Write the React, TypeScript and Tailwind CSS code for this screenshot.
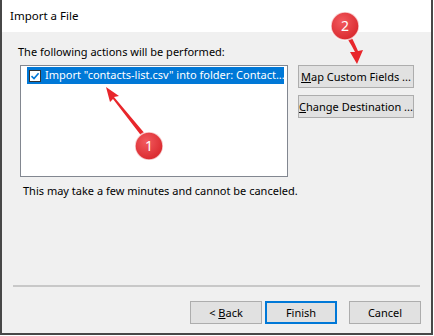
import React from "react";

function DlgButton({ children, primary = false, className = "" }: { children: React.ReactNode; primary?: boolean; className?: string }) {
    return (
        <button
            className={
                "h-[23px] bg-[#e1e1e1] text-[11px] text-black flex items-center justify-center leading-none whitespace-nowrap " +
                (primary ? "border-2 border-[#0078d7] " : "border border-[#adadad] ") +
                className
            }
        >
            {children}
        </button>
    );
}

export default function App() {
    return (
        <div
            className="relative w-[434px] h-[336px] bg-white overflow-hidden"
            style={{ fontFamily: '"Noto Sans", "Open Sans", sans-serif' }}
        >
            <div className="w-[433px] h-[335px] border-l-2 border-r-2 border-b-2 border-[#474747] flex flex-col">
                {/* title bar */}
                <div className="h-[32px] bg-white flex items-center pl-[8px] text-[11.5px] text-black shrink-0">
                    Import a File
                </div>

                {/* body */}
                <div className="flex-1 bg-[#f0f0f0] flex flex-col">
                    <div className="pl-[16px] pt-[12px] text-[11px] text-black leading-[16px]">
                        The following actions will be performed:
                    </div>

                    <div className="flex pl-[18px] pt-[5px]">
                        <div className="w-[268px] h-[112px] bg-white border border-[#828790] p-[1px]">
                            <div className="ml-[5px] h-[17px] w-[257px] bg-[#0078d7] flex items-center text-white text-[11px] whitespace-nowrap overflow-hidden">
                                <span className="ml-[2px] mr-[4px] w-[12px] h-[12px] bg-white border border-[#333] flex items-center justify-center shrink-0">
                                    <svg width="10" height="10" viewBox="0 0 10 10">
                                        <path d="M1.5 5.2 L4 7.6 L8.6 2.2" fill="none" stroke="#0078d7" strokeWidth="1.6" />
                                    </svg>
                                </span>
                                Import "contacts-list.csv" into folder: Contact...
                            </div>
                        </div>

                        <div className="ml-[10px] flex flex-col gap-[7px]">
                            <DlgButton className="w-[116px]">
                                <span><u>M</u>ap Custom Fields ...</span>
                            </DlgButton>
                            <DlgButton className="w-[116px]">
                                <span><u>C</u>hange Destination ...</span>
                            </DlgButton>
                        </div>
                    </div>

                    <div className="pl-[21px] pt-[6px] text-[11px] text-black leading-[16px]">
                        This may take a few minutes and cannot be canceled.
                    </div>

                    <div className="flex-1" />

                    <div className="mx-[11px] h-[2px] bg-[#c8c8c8]" />

                    <div className="flex justify-end pr-[10px] pt-[14px] pb-[9px]">
                        <DlgButton className="w-[72px]">
                            <span>&lt; <u>B</u>ack</span>
                        </DlgButton>
                        <DlgButton primary className="w-[72px] ml-[3px]">
                            Finish
                        </DlgButton>
                        <DlgButton className="w-[72px] ml-[12px]">
                            Cancel
                        </DlgButton>
                    </div>
                </div>
            </div>

            {/* annotations */}
            <svg className="absolute left-0 top-0 pointer-events-none" width="434" height="336" viewBox="0 0 434 336">
                <defs>
                    <radialGradient id="badge" cx="40%" cy="35%" r="70%">
                        <stop offset="0%" stopColor="#f25a5e" />
                        <stop offset="100%" stopColor="#d8262b" />
                    </radialGradient>
                </defs>
                {/* arrow 1 */}
                <path d="M146 135 L114 97 L119 96 L106 87 L110 102 L113 99 L143 138 Z" fill="#e8262b" />
                <circle cx="149" cy="146" r="14" fill="url(#badge)" stroke="#fff" strokeOpacity="0.7" strokeWidth="1.5" />
                <text x="149" y="151" textAnchor="middle" fontSize="14" fill="#fff" fontFamily="Noto Sans, sans-serif">1</text>

                {/* arrow 2 */}
                <path d="M347 38 Q352 46 355 52 L350 52 L357 64 L363 50 L358 51 Q355 44 351 36 Z" fill="#e8262b" />
                <circle cx="345" cy="26" r="14" fill="url(#badge)" stroke="#fff" strokeOpacity="0.7" strokeWidth="1.5" />
                <text x="345" y="31" textAnchor="middle" fontSize="14" fill="#fff" fontFamily="Noto Sans, sans-serif">2</text>
            </svg>
        </div>
    );
}
